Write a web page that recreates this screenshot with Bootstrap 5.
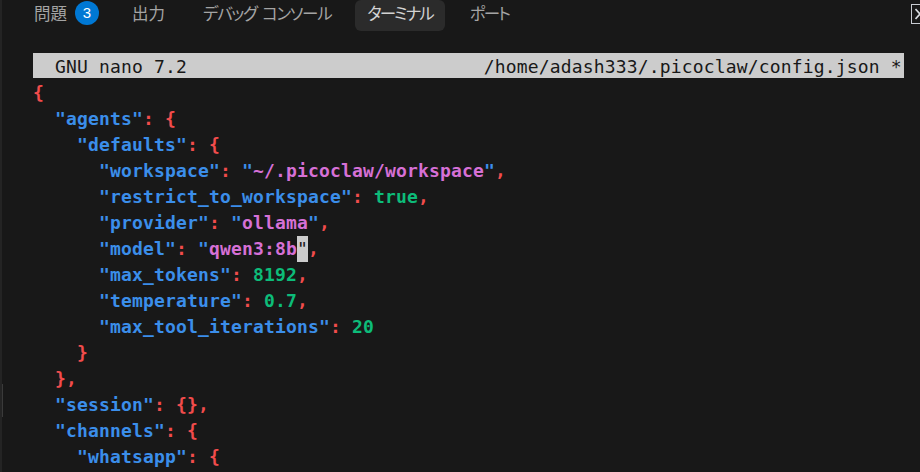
<!DOCTYPE html>
<html lang="ja"><head><meta charset="utf-8">
<link href="https://cdn.jsdelivr.net/npm/bootstrap@5.3.0/dist/css/bootstrap.min.css" rel="stylesheet">
<style>
html,body{background:#181818;height:472px;overflow:hidden;}
.pane{height:472px;overflow:hidden;padding-left:33px;position:relative;border-left:2px solid #242424;}
.tabbar{height:31px;column-gap:13px;font-family:"Noto Sans CJK JP",sans-serif;font-size:16.5px;color:#a4a4a4;margin-left:-1px;}
.tabitem{height:31px;line-height:26px;padding:0 12px;font-feature-settings:"palt";white-space:nowrap;}
.tabitem.on{background:#2b2b2b;color:#d2d2d2;border-radius:6px;letter-spacing:-2px;margin-left:-1px;}
.tab-debug{letter-spacing:-1.3px;word-spacing:3px;margin-left:1px;}
.tab-port{letter-spacing:-1.9px;}
.firsttab{padding:0;margin-right:8px;column-gap:8px;}
.countb{background:#0078d4;color:#fff;font-size:15px;width:24px;height:24px;line-height:24px;margin-top:1px;border-radius:50%;text-align:center;font-family:"Liberation Sans",sans-serif;letter-spacing:0;}
.term{margin-top:22px;margin-left:-2px;font-family:"DejaVu Sans Mono",monospace;font-size:18px;letter-spacing:.16px;color:#cccccc;}
.titlebar{background:#cccccc;color:#181818;height:25px;line-height:27px;width:871px;white-space:pre;margin-bottom:2px;}
.ln{height:26px;line-height:26px;white-space:pre;}
.k{color:#3b8eea}.p{color:#f14c4c}.s{color:#d670d6}.n{color:#0dbc79}
.k,.s,.n,.p{font-weight:700}
.cur{background:#cccccc;color:#181818;display:inline-block;height:26px;font-weight:400;}
.closex{position:absolute;left:909px;top:4px;width:14px;height:20px;border:1px solid #c8ccd2;}
.closex svg{display:block;margin:3px 0 0 3px;}
.gut{position:absolute;left:-2px;top:384px;width:3px;height:33px;background:#3a3a3a;}
</style></head><body>
<div class="pane">
<div class="gut"></div>
<div class="d-flex align-items-start tabbar">
<div class="tabitem firsttab d-flex"><span>問題</span><span class="countb d-block">3</span></div>
<div class="tabitem">出力</div>
<div class="tabitem tab-debug">デバッグ コンソール</div>
<div class="tabitem on">ターミナル</div>
<div class="tabitem tab-port">ポート</div>
</div>
<div class="closex"><svg width="11" height="12" viewBox="0 0 11 12"><path d="M0.5 1L9.5 11M9.5 1L0.5 11" stroke="#d8dce0" stroke-width="1.6" fill="none"/></svg></div>
<div class="term">
<div class="titlebar">  GNU nano 7.2                           /home/adash333/.picoclaw/config.json *</div>
<div class="ln"><span class="p">{</span></div>
<div class="ln">  <span class="k">"agents"</span><span class="p">: {</span></div>
<div class="ln">    <span class="k">"defaults"</span><span class="p">: {</span></div>
<div class="ln">      <span class="k">"workspace"</span><span class="p">:</span> <span class="k">"</span><span class="s">~/.picoclaw/workspace</span><span class="k">"</span><span class="p">,</span></div>
<div class="ln">      <span class="k">"restrict_to_workspace"</span><span class="p">:</span> <span class="n">true</span><span class="p">,</span></div>
<div class="ln">      <span class="k">"provider"</span><span class="p">:</span> <span class="k">"</span><span class="s">ollama</span><span class="k">"</span><span class="p">,</span></div>
<div class="ln">      <span class="k">"model"</span><span class="p">:</span> <span class="k">"</span><span class="s">qwen3:8b</span><span class="cur">"</span><span class="p">,</span></div>
<div class="ln">      <span class="k">"max_tokens"</span><span class="p">:</span> <span class="n">8192</span><span class="p">,</span></div>
<div class="ln">      <span class="k">"temperature"</span><span class="p">:</span> <span class="n">0.7</span><span class="p">,</span></div>
<div class="ln">      <span class="k">"max_tool_iterations"</span><span class="p">:</span> <span class="n">20</span></div>
<div class="ln">    <span class="p">}</span></div>
<div class="ln">  <span class="p">},</span></div>
<div class="ln">  <span class="k">"session"</span><span class="p">: {},</span></div>
<div class="ln">  <span class="k">"channels"</span><span class="p">: {</span></div>
<div class="ln">    <span class="k">"whatsapp"</span><span class="p">: {</span></div>
</div>
</div>
<script src="https://cdn.jsdelivr.net/npm/bootstrap@5.3.0/dist/js/bootstrap.bundle.min.js"></script>
</body></html>
